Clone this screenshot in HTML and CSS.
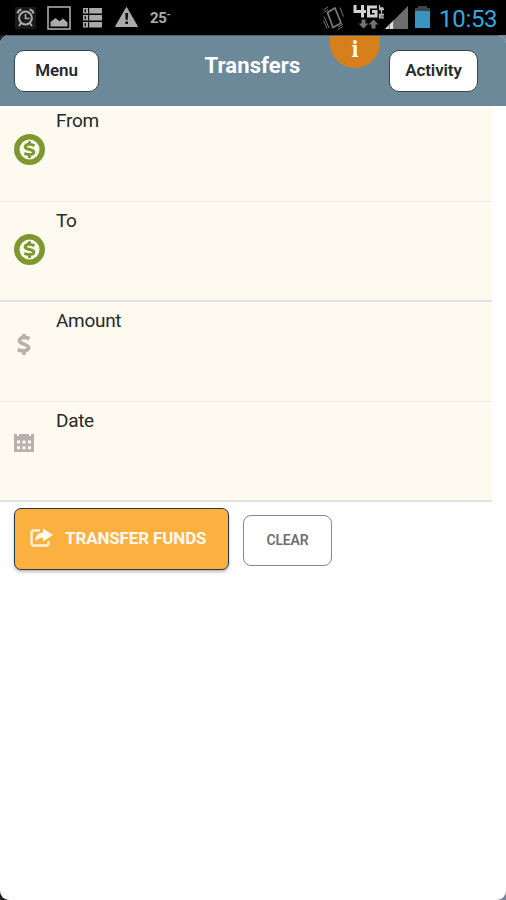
FILE: index.html
```html
<!DOCTYPE html>
<html lang="en">
<head>
<meta charset="utf-8">
<title>Transfers</title>
<link rel="stylesheet" href="styles.css">
</head>
<body>
<div class="status">
  <div class="status-left">
    <svg width="21" height="22" viewBox="0 0 21 22"><rect width="21" height="22" fill="#191919"/><g fill="none" stroke="#aaa" stroke-width="2"><circle cx="10.5" cy="11" r="6.4"/><path d="M2.500 6.500Q3 3 6.500 2.500M14.500 2.500Q18 3 18.500 6.500M6.200 16l-2.200 3M14.800 16l2.200 3"/><path d="M10.500 7v4.500h4" stroke-width="1.600"/></g></svg>
    <svg width="24" height="24" viewBox="0 0 24 24"><rect x="1" y="1" width="22" height="22" fill="none" stroke="#aaa" stroke-width="1.600"/><path d="M3.500 20.500V16l5-4 4 3.200 3.500-2.700 4.500 4v4z" fill="#aaa"/></svg>
    <svg width="20" height="20" viewBox="0 0 20 20"><path d="M0 0h19v5.500H0zM0 7h19v5.500H0zM0 14h19v5.500H0z" fill="#aaa"/><path d="M1.500 1.200h1.500v3H1.500zM1.500 8.300h1.500v3H1.500zM1.500 15.300h1.500v3H1.500zM5 0h1.200v20H5z" fill="#111"/></svg>
    <svg width="23" height="20" viewBox="0 0 23 20"><path d="M11.500.5L22.500 19.500H.5z" fill="#aaa" stroke="#aaa" stroke-linejoin="round"/><path d="M10.200 6h3l-.5 7h-2zM10.300 14.500h2.700V17h-2.700z" fill="#111"/></svg>
    <span class="temp">25<sup>-</sup></span>
  </div>
  <div class="status-right">
    <svg width="21" height="24" viewBox="0 0 21 24"><g fill="none" stroke="#777" stroke-width="1"><path d="M4.500 6.500L12 2 18 17 10 21.500z" stroke-width="1.800" stroke-linejoin="round"/><path d="M1 10.500l5 11.500M.5 14.500l3.500 8M.5 4L5 .8M.8 6.500l4-2.800M15 23.500l5-3M15 21l5-3M17 1.500l3.500 9"/></g></svg>
    <svg class="lte" width="31" height="24" viewBox="0 0 31 24"><g fill="none" stroke="#d2d2d2" stroke-width="3"><path d="M2 0v6.500h11M9.500 0v12.500M24 2h-8.500v9h7.500V6.500h-4"/></g><path d="M26.500 0v3h4M26 4.500h5M28.500 4.500v4M31 9.500h-4.500v3.300H31M27 11.200h3.500" fill="none" stroke="#bbb" stroke-width="1.300"/><path d="M8.500 14.500h4v4h3L10.500 23.500l-5-5h3zM18.500 23.500h4v-4h3l-5-5-5 5h3z" fill="#737373"/></svg>
    <svg class="signal" width="23" height="23" viewBox="0 0 23 23"><path d="M23 0v23H0z" fill="#6d6d6d"/><path d="M9 14v9H0z" fill="#dedede"/><path d="M4.300 18v5M8.600 14v9" stroke="#777" stroke-width="1"/></svg>
    <svg class="battery" width="15" height="22" viewBox="0 0 15 22"><path d="M3 0h9v2h3v20H0V2h3z" fill="#444"/><path d="M0 5h15v17H0z" fill="#3995bb"/></svg>
    <span class="clock">10:53</span>
  </div>
</div>
<div class="frame">
<main class="app">
  <header class="bar">
    <button class="nav">Menu</button>
    <h1>Transfers</h1>
    <div class="info"><span>i</span></div>
    <button class="nav activity">Activity</button>
  </header>
  <section class="form">
    <div class="row"><svg class="coin" width="31" height="31" viewBox="0 0 31 31"><circle cx="15.500" cy="15.500" r="15.500" fill="#7c982f"/><circle cx="15.500" cy="15.500" r="10" fill="#fffaf0"/><path d="M20.500 11.700Q14.500 9 12 11.300C9.500 14 13 15 15.500 15.500S21.500 17.500 19 19.700Q15.800 21.700 10.300 19.300M15.500 7.200v3.500M15.500 20.500v3.500" fill="none" stroke="#7c982f" stroke-width="3"/></svg><label>From</label></div>
    <div class="row strong"><svg class="coin" width="31" height="31" viewBox="0 0 31 31"><circle cx="15.500" cy="15.500" r="15.500" fill="#7c982f"/><circle cx="15.500" cy="15.500" r="10" fill="#fffaf0"/><path d="M20.500 11.700Q14.500 9 12 11.300C9.500 14 13 15 15.500 15.500S21.500 17.500 19 19.700Q15.800 21.700 10.300 19.300M15.500 7.200v3.500M15.500 20.500v3.500" fill="none" stroke="#7c982f" stroke-width="3"/></svg><label>To</label></div>
    <div class="row"><svg class="dollar" width="14" height="21" viewBox="0 0 14 21"><path d="M12.500 4.700Q6.500 2.300 3.500 4.500C.5 8 4.500 9.200 7 10.200S13.300 12.500 10.700 15.500Q7.500 18 .7 15.700M7 0v4M7 16.500V21" fill="none" stroke="#b5b2ab" stroke-width="3.700"/></svg><label>Amount</label></div>
    <div class="row strong"><svg class="calendar" width="20" height="18" viewBox="0 0 20 18"><path d="M0 0h20v18H0z" fill="#b5b2ab"/><path d="M3 0h1.800v2H3zM15.200 0H17v2h-1.800zM3 6.500h3v3H3zM8.500 6.500h3v3h-3zM14 6.500h3v3h-3zM3 12.200h3v3H3zM8.500 12.200h3v3h-3zM14 12.200h3v3h-3z" fill="#fffaf0"/></svg><label>Date</label></div>
  </section>
  <div class="actions">
    <button class="transfer"><svg width="23" height="20" viewBox="0 0 23 20"><path d="M10 2.500H4Q1.500 2.500 1.500 5v10q0 2.500 2.500 2.500h12Q18.500 17.500 18.500 15v-2" fill="none" stroke="#fff1da" stroke-width="2.600"/><path d="M13 .5l10 6.500-10 6.500V10Q8 9.500 5 13.500 5.500 5 13 4.500z" fill="#fff9ef"/></svg><span>TRANSFER FUNDS</span></button>
    <button class="clear">CLEAR</button>
  </div>
</main>
</div>
</body>
</html>
```

FILE: styles.css
```css
* { box-sizing: border-box; }
body {
  margin: 0;
  width: 506px;
  height: 900px;
  overflow: hidden;
  background: #000;
  font-family: Roboto, sans-serif;
  color: #27292c;
}
svg { display: block; flex: none; }
button { font-family: inherit; padding: 0; }
.status {
  height: 35px;
  display: flex;
  justify-content: space-between;
  background: #000;
}
.status-left, .status-right { display: flex; align-items: flex-start; }
.status-left { padding: 7px 0 0 15px; }
.status-left svg:nth-child(2) { margin: -1px 0 0 11px; }
.status-left svg:nth-child(3) { margin: 1px 0 0 12px; }
.status-left svg:nth-child(4) { margin: 0 0 0 12px; }
.temp {
  margin: 3px 0 0 12px;
  font-size: 15px;
  line-height: 17px;
  font-weight: 700;
  letter-spacing: -0.4px;
  color: #aaa;
}
.temp sup { font-size: 11px; line-height: 0; vertical-align: 5px; }
.status-right { width: 183px; padding-top: 6px; }
.lte { margin: -1px 0 0 9px; }
.signal { margin-left: 1px; }
.battery { margin-left: 7px; }
.clock {
  margin: -1px 0 0 9px;
  font-size: 24px;
  line-height: 28px;
  letter-spacing: -0.3px;
  color: #33a9dc;
  white-space: nowrap;
}
.frame {
  height: 865px;
  background: linear-gradient(90deg, #222 50%, #778795 50%);
}
.app {
  height: 865px;
  overflow: hidden;
  background: #fff;
  border-radius: 9px;
}
.bar {
  height: 71px;
  display: flex;
  align-items: flex-start;
  background: #6b8998;
  border-top: 1px solid #4b606d;
}
.nav {
  width: 85px;
  height: 42px;
  margin: 14px 0 0 14px;
  padding-bottom: 3px;
  font-size: 17px;
  font-weight: 600;
  letter-spacing: -0.12px;
  color: #27292c;
  background: #fff;
  border: 1px solid #3b4348;
  border-radius: 10px;
}
.activity { width: 89px; margin-left: 9px; }
h1 {
  width: 97px;
  margin: 16px 0 0 105px;
  font-size: 22px;
  line-height: 27px;
  font-weight: 700;
  letter-spacing: 0.12px;
  color: #fff;
  text-align: center;
}
.info {
  width: 50px;
  height: 32px;
  margin-left: 29px;
  border-radius: 0 0 25px 25px;
  background: #d7801b;
  color: #fff;
  font: 700 22px/26px "DejaVu Serif", serif;
  text-align: center;
}
.info span { display: block; transform: scaleX(0.85); }
.form { width: 492px; background: #fffaf0; }
.row {
  height: 100px;
  display: grid;
  grid-template-columns: 42px 1fr;
  align-items: start;
  padding-left: 14px;
  border-bottom: 1px solid #e6e8e8;
}
.row:first-child { height: 96px; }
.row:first-child label { margin-top: 3px; }
.row:first-child .coin { margin-top: 28px; }
.row.strong { border-bottom: 2px solid #dfe2e4; }
label {
  margin-top: 7px;
  font-size: 19px;
  line-height: 24px;
  letter-spacing: -0.3px;
}
.coin { margin-top: 32px; }
.dollar { margin: 32px 0 0 3px; }
.calendar { margin-top: 32px; }
.actions {
  display: flex;
  align-items: flex-start;
  padding: 6px 0 0 14px;
}
.transfer {
  width: 215px;
  height: 62px;
  display: flex;
  align-items: center;
  padding: 0 0 2px 15px;
  border: 1px solid #243a46;
  border-radius: 7px;
  background: #fcb040;
  box-shadow: 0 2px 3px #bbb;
  color: #fffaf0;
  font-size: 17px;
  font-weight: 700;
  letter-spacing: -0.14px;
}
.transfer span { margin-left: 12px; white-space: nowrap; }
.clear {
  width: 89px;
  height: 51px;
  margin: 7px 0 0 14px;
  padding-bottom: 2px;
  border: 1px solid #888;
  border-radius: 8px;
  background: #fff;
  color: #6e6e6e;
  font-size: 14px;
  font-weight: 600;
  letter-spacing: -0.15px;
}
```
